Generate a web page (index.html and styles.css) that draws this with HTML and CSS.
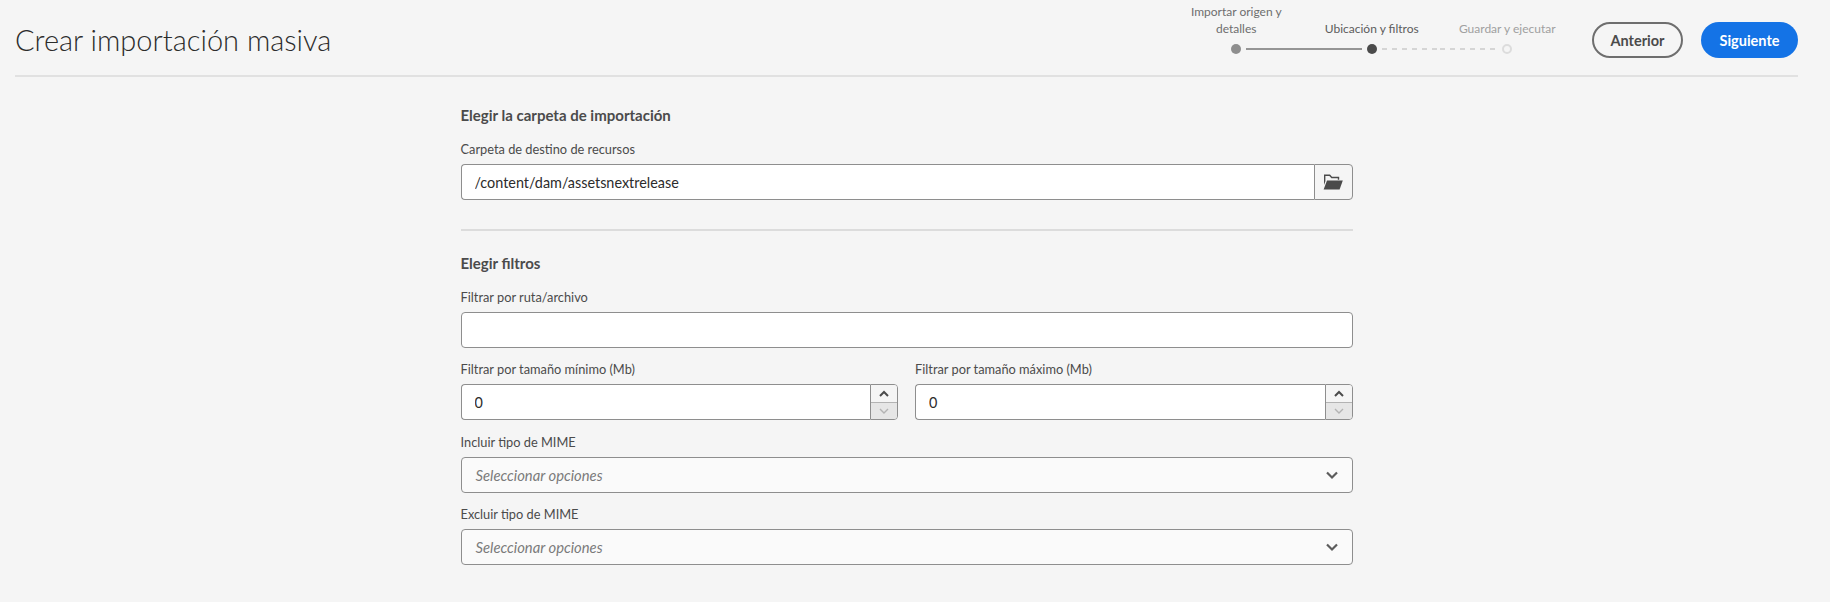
FILE: index.html
```html
<!DOCTYPE html>
<html>

<head>
  <meta charset="utf8">
  <title>Crear importación masiva</title>
  <link rel="stylesheet" href="styles.css">
</head>

<body>
  <header class="cabecera">
    <h1 class="titulo">Crear importación masiva</h1>

    <div class="pasos">
      <div class="paso paso-hecho">
        <span class="paso-texto">Importar origen y detalles</span>
        <div class="paso-pista">
          <span class="tramo"></span>
          <span class="punto"></span>
          <span class="tramo tramo-lleno"></span>
        </div>
      </div>
      <div class="paso paso-actual">
        <span class="paso-texto">Ubicación y filtros</span>
        <div class="paso-pista">
          <span class="tramo tramo-lleno"></span>
          <span class="punto"></span>
          <span class="tramo tramo-puntos"></span>
        </div>
      </div>
      <div class="paso paso-siguiente">
        <span class="paso-texto">Guardar y ejecutar</span>
        <div class="paso-pista">
          <span class="tramo tramo-puntos"></span>
          <span class="punto"></span>
          <span class="tramo"></span>
        </div>
      </div>
    </div>

    <button class="boton boton-anterior">Anterior</button>
    <button class="boton boton-siguiente">Siguiente</button>
  </header>

  <main class="formulario">
    <h2 class="seccion">Elegir la carpeta de importación</h2>
    <label class="etiqueta">Carpeta de destino de recursos</label>
    <div class="grupo">
      <input class="campo" type="text" value="/content/dam/assetsnextrelease">
      <button class="boton-carpeta">
        <svg width="20" height="16" viewBox="0 0 20 16">
          <path fill="#4b4b4b" d="M1 .6h6l2 2.2h7.2v3h-1.4V4.2H8.4L6.4 2H2.4v5.2L1 11z" />
          <path fill="#4b4b4b" d="M4 6.4h15.8L16.6 15.6H.6z" />
        </svg>
      </button>
    </div>

    <hr class="separador">

    <h2 class="seccion">Elegir filtros</h2>

    <div class="filtros">
      <div>
        <label class="etiqueta">Filtrar por ruta/archivo</label>
        <input class="campo campo-solo" type="text">
      </div>

      <div class="dos-columnas">
        <div>
          <label class="etiqueta">Filtrar por tamaño mínimo (Mb)</label>
          <div class="grupo">
            <input class="campo" type="text" value="0">
            <div class="giro">
              <button class="giro-boton">
                <svg width="12" height="8" viewBox="0 0 12 8"><path fill="none" stroke="#4b4b4b" stroke-width="2" d="M2 6l4-4 4 4" /></svg>
              </button>
              <button class="giro-boton giro-apagado">
                <svg width="12" height="8" viewBox="0 0 12 8"><path fill="none" stroke="#b3b3b3" stroke-width="1.4" d="M2 2l4 4 4-4" /></svg>
              </button>
            </div>
          </div>
        </div>
        <div>
          <label class="etiqueta">Filtrar por tamaño máximo (Mb)</label>
          <div class="grupo">
            <input class="campo" type="text" value="0">
            <div class="giro">
              <button class="giro-boton">
                <svg width="12" height="8" viewBox="0 0 12 8"><path fill="none" stroke="#4b4b4b" stroke-width="2" d="M2 6l4-4 4 4" /></svg>
              </button>
              <button class="giro-boton giro-apagado">
                <svg width="12" height="8" viewBox="0 0 12 8"><path fill="none" stroke="#b3b3b3" stroke-width="1.4" d="M2 2l4 4 4-4" /></svg>
              </button>
            </div>
          </div>
        </div>
      </div>

      <div>
        <label class="etiqueta">Incluir tipo de MIME</label>
        <div class="selector">
          <span class="selector-texto">Seleccionar opciones</span>
          <svg width="14" height="10" viewBox="0 0 14 10"><path fill="none" stroke="#5c5c5c" stroke-width="2.2" d="M2 2.5l5 5 5-5" /></svg>
        </div>
      </div>

      <div>
        <label class="etiqueta">Excluir tipo de MIME</label>
        <div class="selector">
          <span class="selector-texto">Seleccionar opciones</span>
          <svg width="14" height="10" viewBox="0 0 14 10"><path fill="none" stroke="#5c5c5c" stroke-width="2.2" d="M2 2.5l5 5 5-5" /></svg>
        </div>
      </div>
    </div>
  </main>
</body>

</html>
```

FILE: styles.css
```css
/* Estilos generales */
body {
  margin: 0;
  padding: 0 32px 0 15px;
  background-color: #f5f5f5;
  font-family: Lato, "Open Sans", sans-serif;
  color: #2c2c2c;
}

/* Cabecera */
.cabecera {
  display: flex;
  align-items: flex-start;
  height: 75px;
  border-bottom: 2px solid #e1e1e1;
}

.titulo {
  flex: 1;
  margin: 21px 0 0;
  font-size: 29px;
  line-height: 38px;
  font-weight: 300;
}

/* Pasos */
.pasos {
  display: flex;
  margin-top: 2px;
  margin-right: 17px;
}

.paso {
  display: flex;
  flex-direction: column;
  justify-content: flex-end;
  width: 135.5px;
  height: 52px;
  text-align: center;
  font-size: 12px;
  line-height: 17px;
}

.paso-texto {
  padding: 0 18px;
  margin-bottom: 7px;
}

.paso-hecho .paso-texto {
  color: #6e6e6e;
}

.paso-actual .paso-texto {
  color: #5c5c5c;
}

.paso-siguiente .paso-texto {
  color: #a0a0a0;
}

.paso-actual .paso-texto,
.paso-siguiente .paso-texto {
  padding: 0;
}

.paso-pista {
  display: flex;
  align-items: center;
  height: 10px;
}

.tramo {
  flex: 1;
  height: 2px;
}

.tramo-lleno {
  background-color: #959595;
}

.tramo-puntos {
  background: repeating-linear-gradient(to right, #d5d5d5 0, #d5d5d5 5px, transparent 5px, transparent 10px);
}

.punto {
  width: 10px;
  height: 10px;
  margin: 0 5px;
  border-radius: 50%;
  box-sizing: border-box;
}

.paso-hecho .punto {
  background-color: #8e8e8e;
}

.paso-actual .punto {
  background-color: #4b4b4b;
}

.paso-siguiente .punto {
  border: 2px solid #dcdcdc;
}

/* Botones */
.boton {
  height: 36px;
  margin-top: 22px;
  border-radius: 18px;
  font-family: inherit;
  font-size: 14.5px;
  font-weight: 700;
}

.boton-anterior {
  width: 91px;
  margin-right: 18px;
  background-color: transparent;
  border: 2px solid #6e6e6e;
  color: #4b4b4b;
}

.boton-siguiente {
  width: 97px;
  background-color: #1473e6;
  border: none;
  color: #fff;
}

/* Formulario */
.formulario {
  width: 892px;
  margin: 0 auto;
}

.seccion {
  margin: 28px 0 15px;
  font-size: 15px;
  line-height: 20px;
  font-weight: 700;
  color: #4b4b4b;
}

.etiqueta {
  display: block;
  margin-bottom: 6px;
  font-size: 12.8px;
  line-height: 18px;
  color: #4b4b4b;
}

.grupo {
  display: flex;
}

.campo {
  flex: 1;
  min-width: 0;
  box-sizing: border-box;
  height: 36px;
  padding: 0 13px;
  background-color: #fff;
  border: 1px solid #8e8e8e;
  border-right: none;
  border-radius: 4px 0 0 4px;
  font-family: inherit;
  font-size: 14.4px;
  color: #2c2c2c;
}

.campo-solo {
  display: block;
  width: 100%;
  border-right: 1px solid #8e8e8e;
  border-radius: 4px;
}

.boton-carpeta {
  display: flex;
  align-items: center;
  justify-content: center;
  width: 39px;
  height: 36px;
  padding: 0;
  background-color: #f5f5f5;
  border: 1px solid #8e8e8e;
  border-radius: 0 4px 4px 0;
}

.separador {
  height: 2px;
  margin: 29px 0 0;
  background-color: #dcdcdc;
  border: none;
}

.separador + .seccion {
  margin-top: 22px;
}

.filtros {
  display: flex;
  flex-direction: column;
  gap: 12.33px;
}

.dos-columnas {
  display: grid;
  grid-template-columns: 1fr 1fr;
  gap: 17px;
}

/* Botones de subir y bajar */
.giro {
  display: flex;
  flex-direction: column;
  width: 28px;
  height: 36px;
  box-sizing: border-box;
  border: 1px solid #8e8e8e;
  border-radius: 0 4px 4px 0;
  overflow: hidden;
}

.giro-boton {
  display: flex;
  flex: 1;
  align-items: center;
  justify-content: center;
  padding: 0;
  background-color: #f5f5f5;
  border: none;
}

.giro-apagado {
  background-color: #e6e6e6;
  border-top: 1px solid #b3b3b3;
}

/* Selectores */
.selector {
  display: flex;
  align-items: center;
  justify-content: space-between;
  box-sizing: border-box;
  height: 36px;
  padding: 0 13px 0 14px;
  background-color: #fafafa;
  border: 1px solid #8e8e8e;
  border-radius: 4px;
}

.selector-texto {
  font-size: 14.8px;
  font-style: italic;
  color: #7a7a7a;
}
```
